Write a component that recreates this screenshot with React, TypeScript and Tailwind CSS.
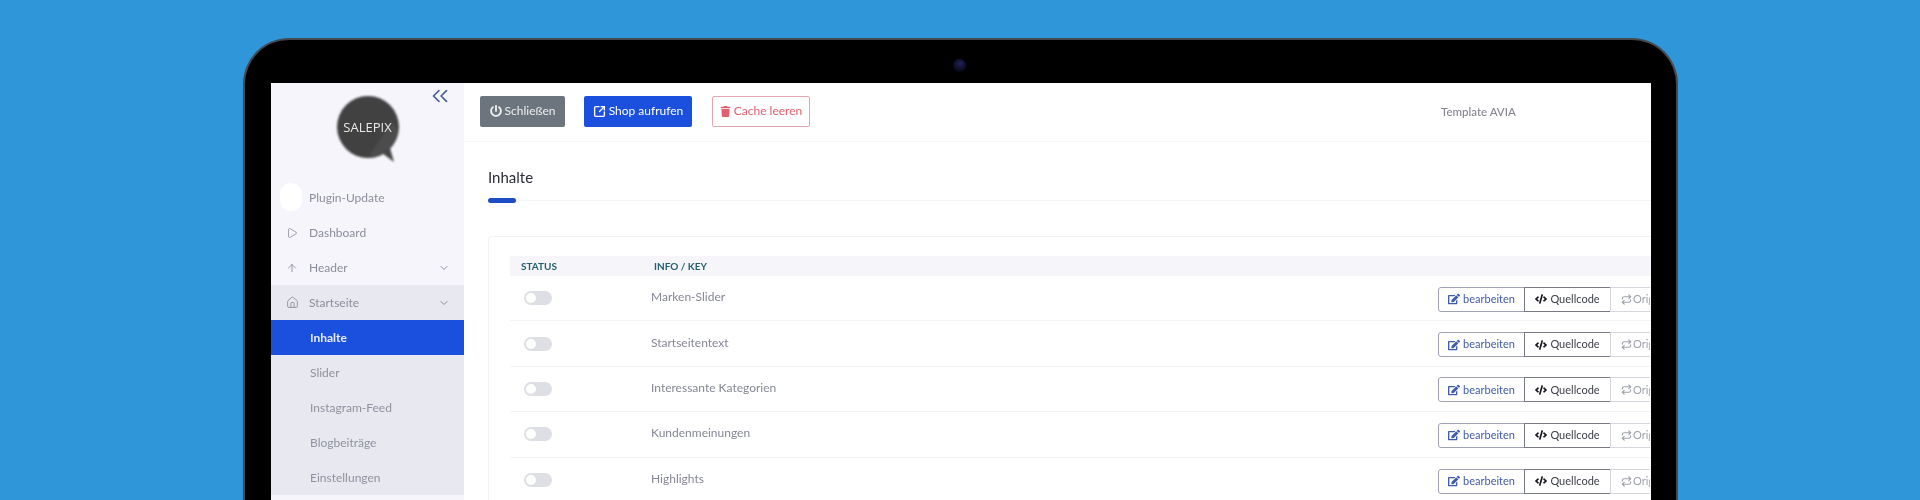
import React from "react";
import { FaCode, FaEdit, FaPowerOff, FaTrash } from "react-icons/fa";
import { ArrowUp, ChevronDown, ChevronsLeft, House, Play, Repeat, SquareArrowOutUpRight } from "lucide-react";

const rows = ["Marken-Slider", "Startseitentext", "Interessante Kategorien", "Kundenmeinungen", "Highlights"];

function NavItem({ label, icon, chevron }: { label: string; icon?: React.ReactNode; chevron?: boolean }) {
  return (
    <div className="flex h-[35px] items-center pl-[15px] pr-[14px] text-[12px] text-[#8b8d9c]">
      <span className="flex w-[23px] shrink-0 items-center text-[#7d8090]">{icon}</span>
      <span className="flex-1">{label}</span>
      {chevron && <ChevronDown size={12} className="text-[#8b8d9c]" />}
    </div>
  );
}

function SubItem({ label, active }: { label: string; active?: boolean }) {
  return (
    <div className={`flex h-[35px] items-center pl-[39px] text-[12px] ${active ? "bg-[#1a50dd] font-bold text-[#e8eefc]" : "text-[#90929f]"}`}>
      {label}
    </div>
  );
}

function Row({ name, last }: { name: string; last?: boolean }) {
  return (
    <div className={`flex h-[45.4px] shrink-0 items-center ${last ? "" : "border-b border-[#f3f4f8]"}`}>
      <div className="ml-[14px] flex w-[127px] shrink-0 items-center">
        <div className="flex h-[14px] w-[28px] items-center rounded-full bg-[#dedfe4] pl-[2px]">
          <div className="h-[10px] w-[10px] rounded-full bg-white" />
        </div>
      </div>
      <div className="flex-1 pb-[2px] text-[12px] text-[#858794]">{name}</div>
      <div className="mr-[1px] mt-[2px] flex h-[25px] w-[212px] shrink-0 overflow-hidden text-[11px]">
        <div className="flex w-[87px] shrink-0 items-center justify-center gap-[3px] rounded-l-[3px] border border-[#9ea2b4] text-[#3f5ba9]">
          <FaEdit size={12} />
          <span>bearbeiten</span>
        </div>
        <div className="ml-[-1px] flex w-[87px] shrink-0 items-center justify-center gap-[3px] border border-[#777a82] text-[#3c3e46]">
          <FaCode size={12} className="text-[#14161c]" />
          <span>Quellcode</span>
        </div>
        <div className="ml-[-1px] flex w-[60px] shrink-0 items-center gap-[1px] border border-[#d6d7dc] pl-[10px] text-[#a0a2aa]">
          <Repeat size={11} strokeWidth={2.6} className="shrink-0" />
          <span className="whitespace-nowrap">Original</span>
        </div>
      </div>
    </div>
  );
}

export default function App() {
  return (
    <div className="h-[500px] overflow-hidden bg-[#2e96d9] pl-[243px] pt-[38px] font-['Lato',sans-serif]">
      <div className="h-[520px] w-[1435px] rounded-t-[46px] border-[2px] border-b-0 border-[#454a50] bg-black pl-[26px] pr-[25px] pt-[43px]">
        <div className="flex h-[440px] overflow-hidden bg-white blur-[0.4px]">
          <aside className="relative w-[193px] shrink-0 bg-[#f5f5fb]">
            <ChevronsLeft size={26} strokeWidth={1.5} className="absolute right-[11px] top-[0px] text-[#45608f]" />
            <div className="flex h-[97px] justify-center pt-[13px]">
              <div className="relative h-[64px] w-[64px]">
                <svg viewBox="0 0 64 68" className="absolute left-0 top-0 h-[68px] w-[64px] blur-[0.8px]">
                  <circle cx="32" cy="31" r="31" fill="#414141" />
                  <path d="M56 25 L62 35 A31 31 0 0 1 40 61 L32 62z" fill="#4c4c4c" />
                  <path d="M46 57 L54 52 L58 66 Z" fill="#474747" />
                </svg>
                <span className="absolute left-0 right-0 top-[23px] text-center font-['Open_Sans',sans-serif] text-[13px] leading-[16px] text-[#e8e8e8]">SALEPIX</span>
              </div>
            </div>
            <div className="absolute left-[9px] top-[100px] h-[28px] w-[22px] rounded-full bg-white" />
            <NavItem label="Plugin-Update" />
            <NavItem label="Dashboard" icon={<Play size={12} strokeWidth={1.4} />} />
            <NavItem label="Header" icon={<ArrowUp size={12} strokeWidth={1.6} />} chevron />
            <div className="bg-[#e7e8f0]">
              <NavItem label="Startseite" icon={<House size={13} strokeWidth={1.4} />} chevron />
              <SubItem label="Inhalte" active />
              <SubItem label="Slider" />
              <SubItem label="Instagram-Feed" />
              <SubItem label="Blogbeiträge" />
              <SubItem label="Einstellungen" />
            </div>
          </aside>
          <main className="min-w-0 flex-1">
            <header className="flex h-[59px] items-center border-b border-[#f4f5f9] pb-[2px] pl-[16px] text-[12px]">
              <button className="flex h-[31px] w-[85px] items-center justify-center gap-[3px] rounded-[2px] bg-[#6c757d] text-[#eceef0]">
                <FaPowerOff size={12} />
                <span>Schließen</span>
              </button>
              <button className="ml-[19px] flex h-[31px] w-[108px] items-center justify-center gap-[3px] rounded-[2px] bg-[#1a50dd] text-white">
                <SquareArrowOutUpRight size={13} strokeWidth={2.6} />
                <span>Shop aufrufen</span>
              </button>
              <button className="ml-[20px] flex h-[31px] w-[98px] items-center justify-center gap-[3px] rounded-[2px] border border-[#e3a7b0] text-[#e0606f]">
                <FaTrash size={11} />
                <span>Cache leeren</span>
              </button>
              <div className="ml-[631px] mt-[2px] text-[11.5px] font-medium text-[#85868f]">Template AVIA</div>
            </header>
            <section className="pl-[24px]">
              <div className="flex h-[49px] items-end text-[15px] text-[#2a2c36]">
                <span className="mb-[4px] leading-[20px]">Inhalte</span>
              </div>
              <div className="mt-[7px] flex items-center">
                <div className="h-[5px] w-[28px] rounded-full bg-[#1c4dc4]" />
                <div className="h-px flex-1 bg-[#f3f4f8]" />
              </div>
              <div className="mt-[33px] h-[300px] rounded-tl-[4px] border border-b-0 border-r-0 border-[#f1f2f6] pl-[21px] pt-[19px]">
                <div className="flex h-[20px] items-center bg-[#f6f6fa] pl-[11px] text-[10px] font-bold text-[#23606f]">
                  <span className="w-[133px]">STATUS</span>
                  <span>INFO / KEY</span>
                </div>
                {rows.map((r, i) => (
                  <Row key={r} name={r} last={i === rows.length - 1} />
                ))}
              </div>
            </section>
          </main>
        </div>
      </div>
      <div className="absolute left-[953px] top-[59px] h-[13px] w-[13px] rounded-full bg-[radial-gradient(circle_at_55%_35%,#20205a,#0a0a1c_65%,#000)]" />
    </div>
  );
}
